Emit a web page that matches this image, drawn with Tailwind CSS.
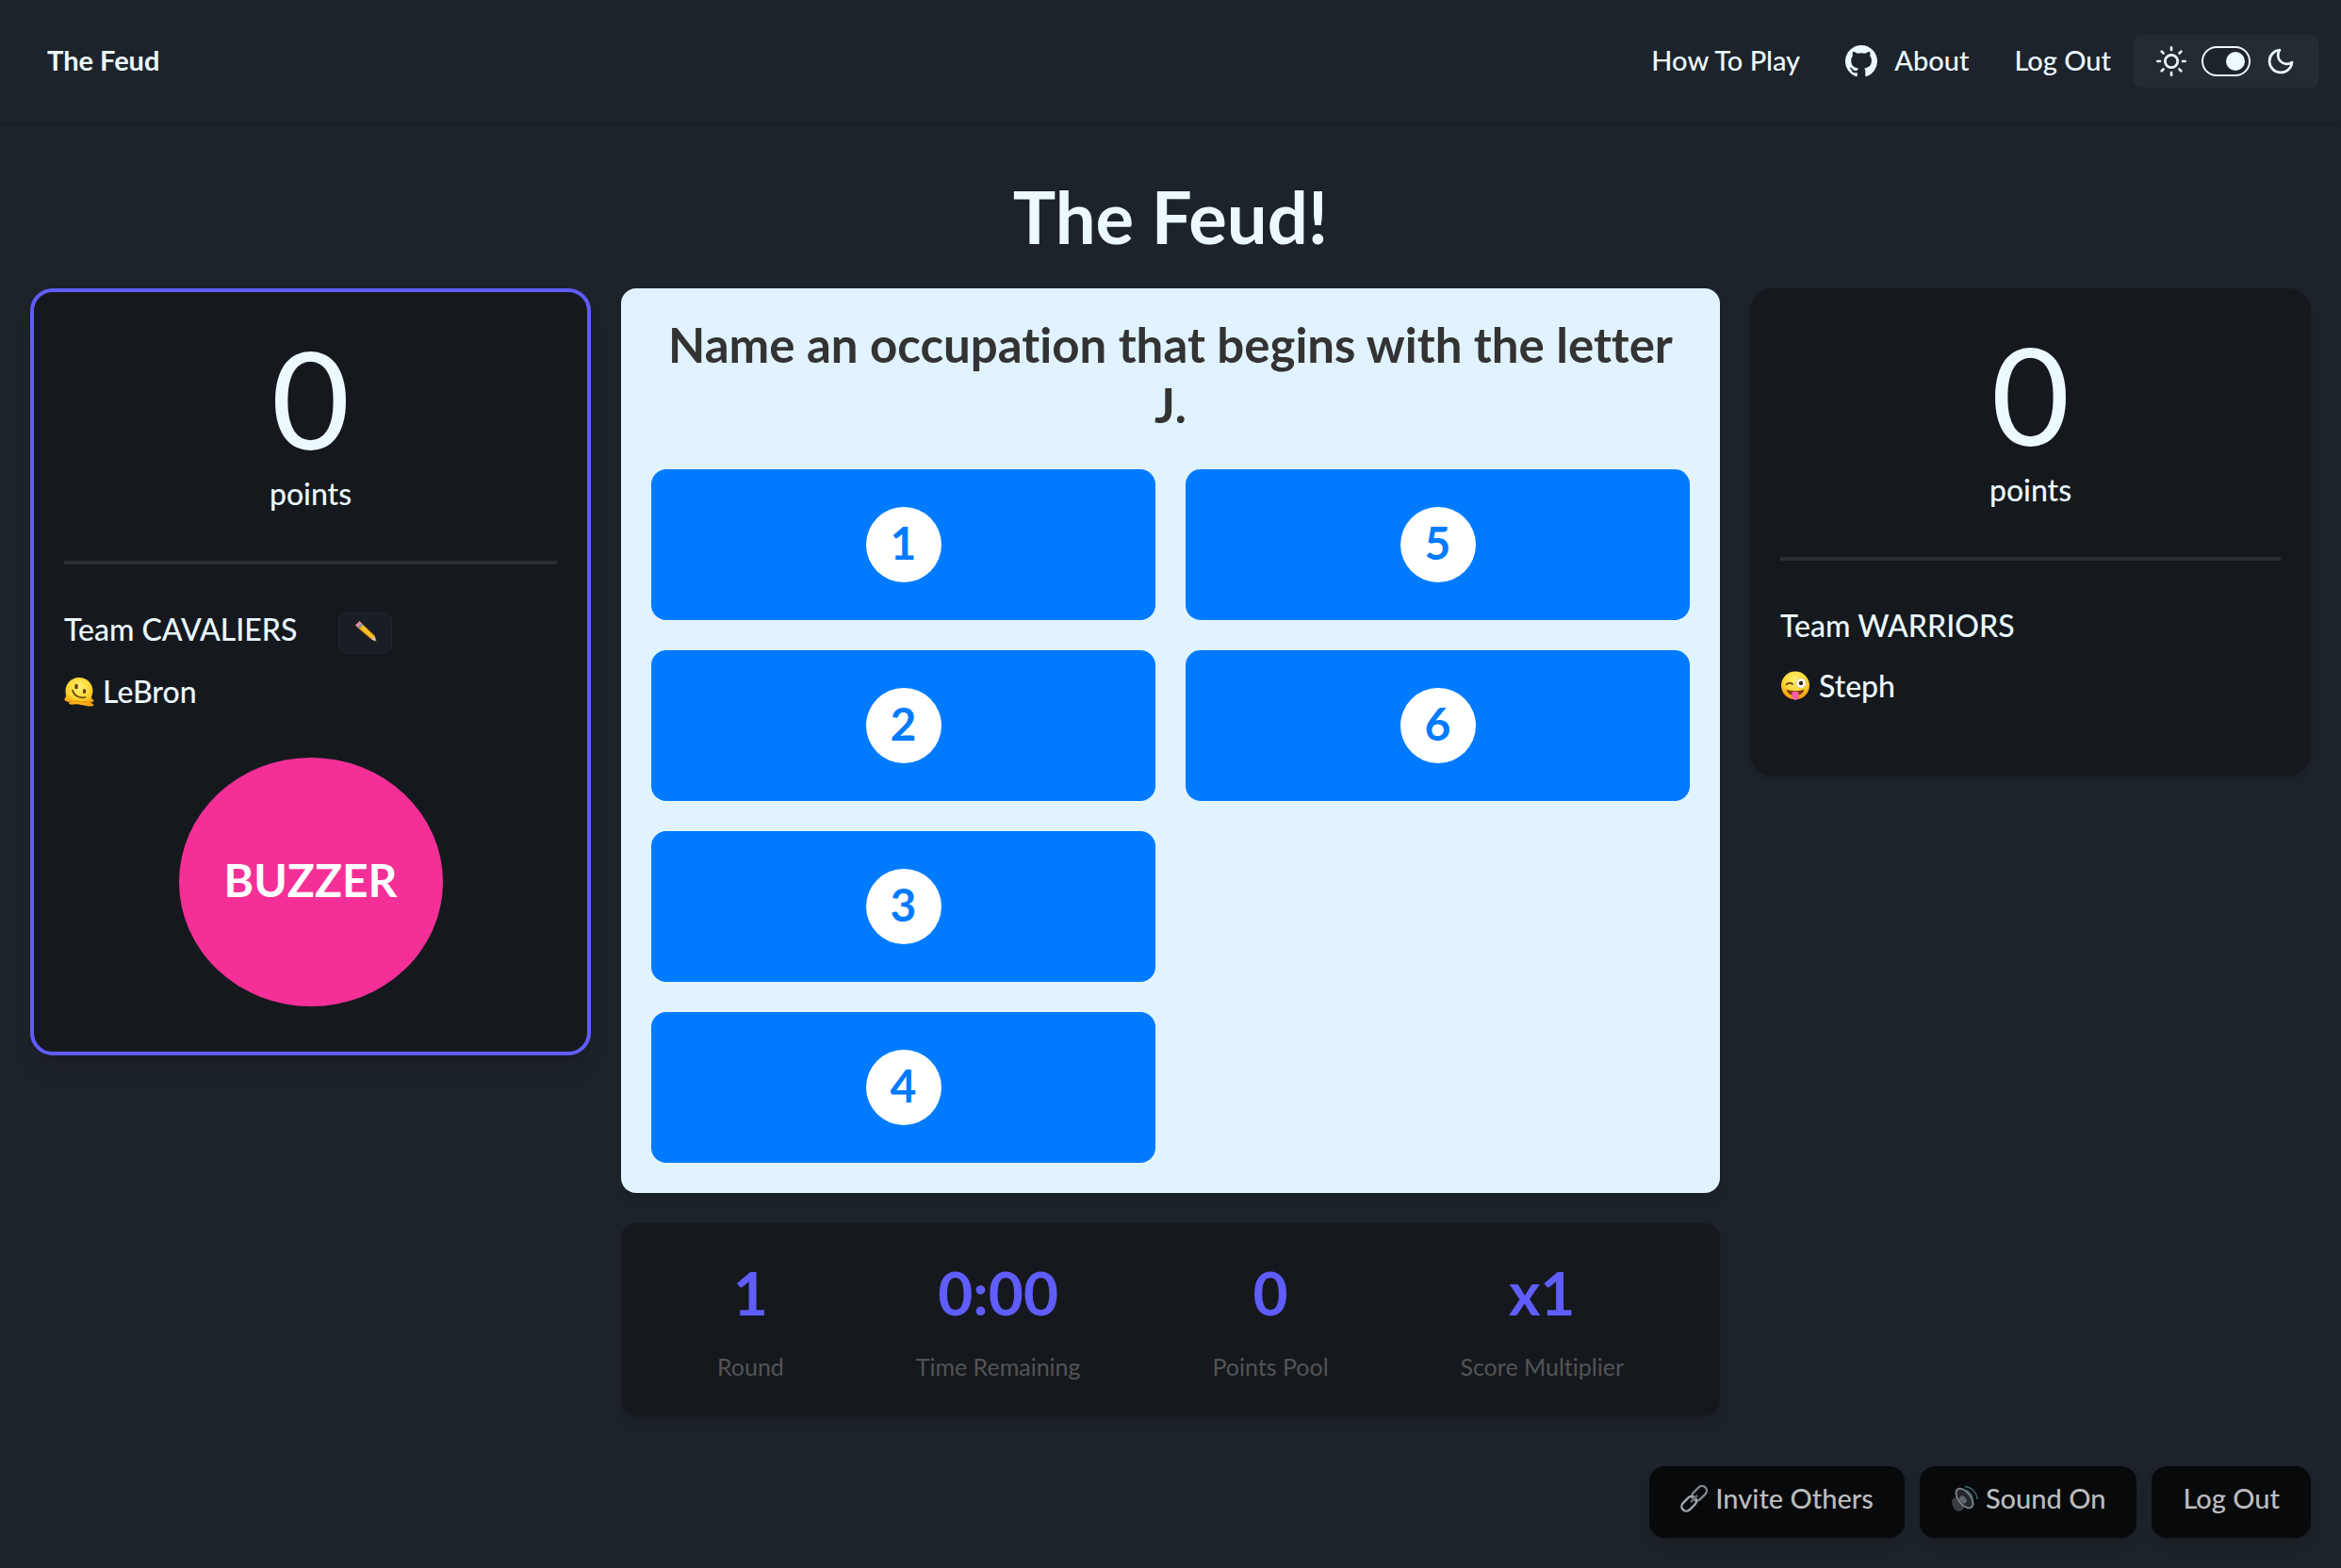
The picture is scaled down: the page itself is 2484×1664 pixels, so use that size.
<!DOCTYPE html>
<html lang="en">
<head>
<meta charset="utf-8">
<meta name="viewport" content="width=device-width, initial-scale=1">
<title>The Feud</title>
<script src="https://cdn.jsdelivr.net/npm/@tailwindcss/browser@4"></script>
</head>
<body class="flex min-h-screen flex-col bg-[#1d232a] font-['Lato','Liberation_Sans',sans-serif] font-medium text-[#ecf9ff] [font-variant-ligatures:none]">

<header class="flex h-[130px] items-center justify-between pr-6 pl-[50px] shadow-md">
  <a href="#" class="pb-0.5 text-[29px] leading-9 font-bold">The Feud</a>
  <nav class="flex items-center text-[29px] leading-9">
    <a href="#" class="pb-0.5">How To Play</a>
    <a href="#" class="ml-12 flex items-center gap-[18px]">
      <svg class="size-[34px]" viewBox="0 0 16 16" fill="currentColor" aria-hidden="true"><path d="M8 0C3.58 0 0 3.58 0 8c0 3.54 2.29 6.53 5.47 7.59.4.07.55-.17.55-.38 0-.19-.01-.82-.01-1.49-2.01.37-2.53-.49-2.69-.94-.09-.23-.48-.94-.82-1.13-.28-.15-.68-.52-.01-.53.63-.01 1.08.58 1.23.82.72 1.21 1.87.87 2.33.66.07-.52.28-.87.51-1.07-1.78-.2-3.64-.89-3.64-3.95 0-.87.31-1.59.82-2.15-.08-.2-.36-1.02.08-2.12 0 0 .67-.21 2.2.82.64-.18 1.32-.27 2-.27s1.36.09 2 .27c1.53-1.04 2.2-.82 2.2-.82.44 1.1.16 1.92.08 2.12.51.56.82 1.27.82 2.15 0 3.07-1.87 3.75-3.65 3.95.29.25.54.73.54 1.48 0 1.07-.01 1.93-.01 2.2 0 .21.15.46.55.38A8.01 8.01 0 0 0 16 8c0-4.42-3.58-8-8-8z"/></svg>
      <span class="pb-0.5">About</span>
    </a>
    <button type="button" class="ml-12 pb-0.5">Log Out</button>
    <label class="ml-6 flex h-14 items-center gap-4 rounded-lg bg-[#242b33] px-6">
      <svg class="size-8" viewBox="0 0 24 24" fill="none" stroke="currentColor" stroke-width="2" stroke-linecap="round" stroke-linejoin="round" aria-hidden="true"><circle cx="12" cy="12" r="5"/><path d="M12 1v2M12 21v2M4.22 4.22l1.42 1.42M18.36 18.36l1.42 1.42M1 12h2M21 12h2M4.22 19.78l1.42-1.42M18.36 5.64l1.42-1.42"/></svg>
      <input type="checkbox" checked aria-label="Dark theme" class="h-8 w-[52px] appearance-none rounded-full border-2 border-[#ecf9ff] bg-[#1d232a] p-1 before:ml-auto before:block before:size-5 before:rounded-full before:bg-[#ecf9ff] before:content-['']">
      <svg class="size-8" viewBox="0 0 24 24" fill="none" stroke="currentColor" stroke-width="2" stroke-linecap="round" stroke-linejoin="round" aria-hidden="true"><path d="M21 12.79A9 9 0 1 1 11.21 3 7 7 0 0 0 21 12.79z"/></svg>
    </label>
  </nav>
</header>

<h1 class="mt-16 mb-10 text-center text-[76px] leading-[72px] font-bold">The Feud!</h1>

<main class="grid grid-cols-[595fr_1166fr_595fr] items-start gap-8 px-8">

  <section class="rounded-3xl border-4 border-[#605dff] bg-[#15191e] px-8 pt-10 pb-12 shadow-xl">
    <p class="text-center text-[144px] leading-36 font-normal">0</p>
    <p class="mt-[10px] text-center text-[32px] leading-10">points</p>
    <hr class="mt-[51px] mb-[49px] border-0 border-t-4 border-[#2a2d31]">
    <div class="flex h-[42px] items-start gap-11 text-[32px] leading-10">
      <h2>Team CAVALIERS</h2>
      <button type="button" aria-label="Edit team name" class="mt-0.5 flex h-11 w-[57px] shrink-0 items-center justify-center rounded-lg border border-[#22272d] bg-[#191e24] pb-1 shadow-sm">
        <svg class="size-6" viewBox="0 0 24 24" aria-hidden="true"><path d="M1 5.500 5.500 1 8 3.500 3.500 8z" fill="#f08a90"/><path d="M3 7.500 7.500 3 9.500 5 5 9.500z" fill="#8d97a3"/><path d="M5 9.500 9.500 5 21.500 16.500 17.500 20z" fill="#e8a213"/><path d="M6.500 8 8.500 6 20.500 17.500 18.500 19z" fill="#fcc72c"/><path d="M17.500 20 21.500 16.500 23.500 23.500z" fill="#e9c795"/><path d="M21 22.700 23 21.500 23.500 23.500z" fill="#333"/></svg>
      </button>
    </div>
    <p class="mt-6 flex items-center gap-[9px] text-[32px] leading-10">
      <svg class="h-8 w-[32px]" viewBox="0 0 32 32" aria-label="melting face" role="img">
        <defs><radialGradient id="melt" cx=".5" cy=".35" r=".65"><stop offset="0" stop-color="#fff27a"/><stop offset=".6" stop-color="#ffd52e"/><stop offset="1" stop-color="#f6a313"/></radialGradient></defs>
        <path d="M16 1C7.500 1 1.500 7.500 1.500 15.500c0 2.500.8 4.500.3 6C1 23 0 23.500.5 25c.7 1.500 3 1.200 4.500 1.700.8.500-.5 1.500.5 2.300 2 1.500 5 .3 8 .3 3.500 0 5 1.200 8 1.400 3 .3 4 1 7 .8 2-.2 3.500-1.200 2.700-2.300-.7-1-2.500-.7-2.700-1.500 0-1 3-.6 3-2.200 0-1.400-2.500-1.500-2.500-3 0-2.200 1.500-4 1.500-7C30.500 7.500 24.500 1 16 1z" fill="url(#melt)"/>
        <ellipse cx="13" cy="10.500" rx="1.900" ry="2.700" fill="#694104"/><ellipse cx="21.500" cy="15.500" rx="1.700" ry="2.500" fill="#694104"/>
        <path d="M9 14.500c1.500 6 7.500 9 13.500 7.500" fill="none" stroke="#694104" stroke-width="1.600" stroke-linecap="round"/>
        <path d="M3 26c5 1 9-.5 13 .5s8 .5 12 .300" fill="none" stroke="#f08f0c" stroke-width="1.200"/>
      </svg>
      LeBron
    </p>
    <button type="button" class="mx-auto mt-[50px] flex h-[264px] w-[280px] items-center justify-center rounded-[50%] bg-[#f43098] pb-1 text-5xl font-bold text-white">BUZZER</button>
  </section>

  <div class="flex flex-col gap-8">
    <section class="rounded-2xl bg-[#e0f3ff] px-8 pt-7 pb-8 shadow-lg">
      <h2 class="mb-9 px-4 text-center text-[51px] leading-16 font-bold text-[#333]">Name an occupation that begins with the letter J.</h2>
      <ol class="grid grid-flow-col grid-cols-2 grid-rows-4 gap-8 text-5xl font-bold text-[#007bff]">
        <li class="flex h-40 items-center justify-center rounded-2xl bg-[#007bff]"><span class="flex size-20 items-center justify-center rounded-full bg-white pb-1">1</span></li>
        <li class="flex h-40 items-center justify-center rounded-2xl bg-[#007bff]"><span class="flex size-20 items-center justify-center rounded-full bg-white pb-1">2</span></li>
        <li class="flex h-40 items-center justify-center rounded-2xl bg-[#007bff]"><span class="flex size-20 items-center justify-center rounded-full bg-white pb-1">3</span></li>
        <li class="flex h-40 items-center justify-center rounded-2xl bg-[#007bff]"><span class="flex size-20 items-center justify-center rounded-full bg-white pb-1">4</span></li>
        <li class="flex h-40 items-center justify-center rounded-2xl bg-[#007bff]"><span class="flex size-20 items-center justify-center rounded-full bg-white pb-1">5</span></li>
        <li class="flex h-40 items-center justify-center rounded-2xl bg-[#007bff]"><span class="flex size-20 items-center justify-center rounded-full bg-white pb-1">6</span></li>
      </ol>
    </section>

    <dl class="flex justify-around rounded-2xl bg-[#15191e] px-8 pt-10 pb-9 text-center shadow-lg">
      <div class="flex flex-col-reverse gap-7"><dt class="text-[25px] leading-8 font-normal text-[#545454]">Round</dt><dd class="text-[64px] leading-[68px] font-bold text-[#605dff]">1</dd></div>
      <div class="flex flex-col-reverse gap-7"><dt class="text-[25px] leading-8 font-normal text-[#545454]">Time Remaining</dt><dd class="text-[64px] leading-[68px] font-bold text-[#605dff]">0:00</dd></div>
      <div class="flex flex-col-reverse gap-7"><dt class="text-[25px] leading-8 font-normal text-[#545454]">Points Pool</dt><dd class="text-[64px] leading-[68px] font-bold text-[#605dff]">0</dd></div>
      <div class="flex flex-col-reverse gap-7"><dt class="text-[25px] leading-8 font-normal text-[#545454]">Score Multiplier</dt><dd class="text-[64px] leading-[68px] font-bold text-[#605dff]">x1</dd></div>
    </dl>
  </div>

  <section class="rounded-3xl bg-[#15191e] px-8 pt-10 pb-[75px] shadow-md">
    <p class="text-center text-[144px] leading-36 font-normal">0</p>
    <p class="mt-[10px] text-center text-[32px] leading-10">points</p>
    <hr class="mt-[51px] mb-[49px] border-0 border-t-4 border-[#2a2d31]">
    <h2 class="text-[32px] leading-10">Team WARRIORS</h2>
    <p class="mt-6 flex items-center gap-[9px] text-[32px] leading-10">
      <svg class="h-8 w-[32px]" viewBox="0 0 32 32" aria-label="winking face with tongue" role="img">
        <defs><radialGradient id="wink" cx=".5" cy=".3" r=".7"><stop offset="0" stop-color="#fff27a"/><stop offset=".6" stop-color="#ffd52e"/><stop offset="1" stop-color="#f08f0c"/></radialGradient></defs>
        <circle cx="16" cy="15.500" r="15" fill="url(#wink)"/>
        <path d="M6.500 14.500c1.500-2 4.500-2.200 6.500-.5" fill="none" stroke="#694104" stroke-width="1.700" stroke-linecap="round"/>
        <circle cx="22" cy="13" r="5.300" fill="#fff" stroke="#d9a441" stroke-width=".6"/><circle cx="22" cy="13" r="2.200" fill="#3d2600"/>
        <path d="M6.500 19.500c5 2.300 14 2.300 19 0-.8 4-4.500 6.800-9.500 6.800s-8.700-2.800-9.500-6.800z" fill="#7a3e06"/>
        <path d="M12.500 22.500c2-1 5-1 7 0v4.500c0 5-7 5-7 0z" fill="#fb5ea8"/>
      </svg>
      Steph
    </p>
  </section>
</main>

<footer class="mt-auto flex justify-end gap-4 px-8 pt-12 pb-8 text-[29px] leading-9 text-[#babcbe]">
  <button type="button" class="flex h-[76px] items-center gap-2 rounded-2xl bg-[#08090b] px-[33px] pb-2 shadow-lg">
    <svg class="size-[29px]" viewBox="0 0 29 29" fill="none" aria-hidden="true"><g transform="rotate(45 14.500 14.500)" stroke-width="2.400"><rect x="9.500" y="-2.500" width="10" height="18" rx="5" stroke="#7f868e"/><rect x="9.500" y="13" width="10" height="18" rx="5" stroke="#a3a9af"/><path d="M14.500 9.500v10" stroke="#646b72"/></g></svg>
    Invite Others
  </button>
  <button type="button" class="flex h-[76px] items-center gap-2 rounded-2xl bg-[#08090b] px-[33px] pb-2 shadow-lg">
    <svg class="size-[29px]" viewBox="0 0 29 29" fill="none" aria-hidden="true"><path d="M1 17c0-2 3-4 6-5l8 10c-1 3-4 6-7 6-4 0-7-6-7-11z" fill="#383d42"/><ellipse cx="14.500" cy="14" rx="6.500" ry="12" transform="rotate(-38 14.500 14)" fill="#24282c" stroke="#7d858d" stroke-width="1.800"/><ellipse cx="13" cy="15.500" rx="3.300" ry="4.500" transform="rotate(-38 13 15.500)" fill="#5d656d"/><path d="M14 5c5 .5 9 5 9.500 10.500M14.500 1.500C22 2 28 8.500 28 15" stroke="#3f686c" stroke-width="1.400"/></svg>
    Sound On
  </button>
  <button type="button" class="flex h-[76px] items-center rounded-2xl bg-[#08090b] px-[33px] pb-2 shadow-lg">Log Out</button>
</footer>
</body>
</html>
